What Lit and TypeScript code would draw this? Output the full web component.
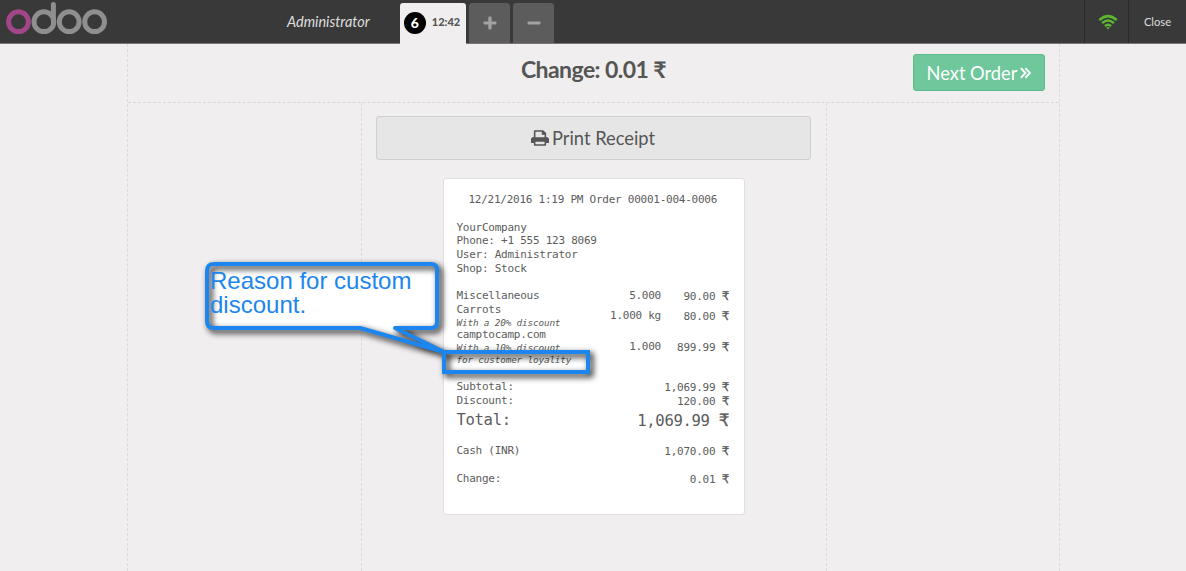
import { LitElement, html, css, svg } from "lit";
import { customElement } from "lit/decorators.js";

interface Line {
  name: string;
  notes: string[];
  qty: string;
  price: string;
}

const LINES: Line[] = [
  { name: "Miscellaneous", notes: [], qty: "5.000", price: "90.00" },
  { name: "Carrots", notes: ["With a 20% discount"], qty: "1.000 kg", price: "80.00" },
  {
    name: "camptocamp.com",
    notes: ["With a 10% discount", "for customer loyality"],
    qty: "1.000",
    price: "899.99",
  },
];

@customElement("pos-topbar")
export class PosTopbar extends LitElement {
  static styles = css`
    :host {
      display: flex;
      background: #393939;
      border-bottom: 1px solid #7b7577;
      box-sizing: border-box;
      height: 44px;
      font-family: Lato, sans-serif;
      color: #ddd;
    }
    .logo {
      width: 280px;
      height: 43px;
      flex: none;
    }
    .user {
      padding-left: 7px;
      margin-right: 16px;
      width: 97px;
      font-size: 14.5px;
      font-style: italic;
      line-height: 44px;
    }
    .tabs {
      display: flex;
      gap: 3px;
      align-items: flex-start;
      padding-top: 3px;
      flex: 1;
    }
    .tab {
      display: flex;
      align-items: center;
      justify-content: center;
      width: 41px;
      height: 40px;
      background: #5c5c5c;
      border-radius: 3px 3px 0 0;
    }
    .active {
      width: 66px;
      height: 41px;
      gap: 6px;
      margin-right: -0.4px;
      background: #f0eeee;
      color: #555;
      font-size: 11px;
      font-weight: 900;
    }
    .time {
      margin: 0 2px 4px 0;
    }
    .num {
      width: 22px;
      height: 22px;
      line-height: 22px;
      margin-bottom: 2px;
      border-radius: 50%;
      background: #000;
      color: #fff;
      text-align: center;
      font-size: 14px;
      font-weight: 900;
    }
    .tab svg {
      margin-left: 1px;
    }
    .wifi,
    .close {
      display: flex;
      align-items: center;
      justify-content: center;
      border-left: 1px solid #292929;
      box-sizing: border-box;
    }
    .wifi {
      width: 44px;
      padding-left: 3px;
    }
    .close {
      width: 58px;
      font-size: 11.2px;
    }
  `;

  render() {
    return html`
      <svg class="logo" viewBox="0 0 280 43" fill="none" stroke-width="5" stroke="#8f8f8f">
        <circle cx="18.5" cy="21.7" r="9.9" stroke="#a24689" />
        <circle cx="43.9" cy="21.7" r="9.9" />
        <path d="M53.4 21.700V4.500" stroke-linecap="round" />
        <circle cx="69.2" cy="21.7" r="9.9" />
        <circle cx="94.6" cy="21.7" r="9.9" />
      </svg>
      <div class="user">Administrator</div>
      <div class="tabs">
        <div class="tab active"><span class="num">6</span><span class="time">12:42</span></div>
        <div class="tab">
          <svg width="14" height="14" viewBox="0 0 14 14" fill="#a2a2a2">
            <path d="M5.300 1.500q0-1 1-1h1.300q1 0 1 1v3.900h3.900q1 0 1 1v1.200q0 1-1 1H8.600v3.900q0 1-1 1H6.300q-1 0-1-1V8.600H1.500q-1 0-1-1V6.400q0-1 1-1h3.800z" />
          </svg>
        </div>
        <div class="tab">
          <svg width="14" height="14" viewBox="0 0 14 14" fill="#a2a2a2">
            <rect x=".5" y="5.4" width="13" height="3.2" rx="1" />
          </svg>
        </div>
      </div>
      <div class="wifi">
        <svg width="20" height="16" viewBox="0 0 20 16" fill="none" stroke="#5cb531" stroke-width="2.5">
          <path d="M1.300 6.100Q10-1.900 18.700 6.100M4.100 9.100Q10 3.900 15.900 9.100M6.900 12.100Q10 9.500 13.100 12.100" />
          <path d="M8.200 13.600q1.800-1.300 3.600 0L10 15.600z" fill="#5cb531" stroke="none" />
        </svg>
      </div>
      <div class="close">Close</div>
    `;
  }
}

@customElement("pos-receipt")
export class PosReceipt extends LitElement {
  static styles = css`
    :host {
      display: block;
      box-sizing: border-box;
      width: 302px;
      height: 337px;
      padding: 14.4px 14.5px 0 13px;
      background: #fff;
      border: 1px solid #e0dede;
      border-radius: 3px;
      color: #5c5c5c;
      font: 11px/13.7px "DejaVu Sans Mono", monospace;
      letter-spacing: -0.25px;
      white-space: pre;
    }
    .head {
      text-align: center;
      margin-bottom: 13.5px;
    }
    .line {
      display: grid;
      grid-template-columns: 1fr 80px 68px;
      align-items: center;
      text-align: right;
    }
    .name {
      text-align: left;
      line-height: 14px;
    }
    .note {
      font-size: 9.4px;
      letter-spacing: -0.18px;
      font-style: italic;
      line-height: 11.6px;
    }
    .lines {
      padding-top: 13.3px;
      padding-bottom: 14.4px;
    }
    .sum {
      display: flex;
      justify-content: space-between;
      line-height: 14.5px;
    }
    .total {
      font-size: 15.6px;
      letter-spacing: -0.35px;
      line-height: 22px;
    }
    .cash {
      margin-top: 13px;
    }
    .change {
      margin-top: 14px;
    }
    .amt {
      padding-top: 1px;
      margin-bottom: -1px;
    }
    .cur {
      font-family: "DejaVu Sans", sans-serif;
      font-size: 1.08em;
      line-height: 1;
      -webkit-text-stroke: 0.3px #5c5c5c;
    }
  `;

  private sum(label: string, amount: string, cls = "") {
    return html`<div class="sum ${cls}"><span>${label}</span><span class="amt">${amount} <span class="cur">₹</span></span></div>`;
  }

  render() {
    return html`<div class="head">12/21/2016 1:19 PM Order 00001-004-0006</div><div>YourCompany</div><div>Phone: +1 555 123 8069</div><div>User: Administrator</div><div>Shop: Stock</div><div class="lines">${LINES.map(
      (l) =>
        html`<div class="line"><div class="name">${l.name}${l.notes.map((n) => html`<div class="note">${n}</div>`)}</div><span>${l.qty}</span><span class="amt">${l.price} <span class="cur">₹</span></span></div>`
    )}</div>${this.sum("Subtotal:", "1,069.99")}${this.sum("Discount:", "120.00")}${this.sum("Total:", "1,069.99", "total")}${this.sum("Cash (INR)", "1,070.00", "cash")}${this.sum("Change:", "0.01", "change")}`;
  }
}

@customElement("app-root")
export class AppRoot extends LitElement {
  static styles = css`
    :host {
      display: flex;
      flex-direction: column;
      position: relative;
      height: 571px;
      overflow: hidden;
      background: #f0eeee;
      font-family: Lato, sans-serif;
      color: #555;
    }
    .screen {
      flex: 1;
      width: 933px;
      margin-left: 127px;
      box-sizing: border-box;
      border: dashed #dcdada;
      border-width: 0 1px;
      display: flex;
      flex-direction: column;
    }
    .top {
      height: 59px;
      box-sizing: border-box;
      border-bottom: 1px dashed #d8d6d6;
      display: grid;
      grid-template-columns: 1fr auto 1fr;
      align-items: start;
    }
    .title {
      grid-column: 2;
      margin: 0;
      padding-top: 11px;
      font-size: 23px;
      letter-spacing: -0.55px;
      line-height: 29px;
      font-weight: 700;
    }
    .next {
      justify-self: end;
      display: flex;
      align-items: center;
      justify-content: center;
      gap: 3px;
      margin: 10px 14px 0 0;
      width: 132px;
      height: 37px;
      box-sizing: border-box;
      background: #6ec89b;
      border: 1px solid #5eb98b;
      border-radius: 3px;
      color: #fff;
      font-size: 18.3px;
    }
    .center {
      flex: 1;
      width: 466px;
      box-sizing: border-box;
      margin-left: 233px;
      border: dashed #dcdada;
      border-width: 0 1px;
      padding: 13px 15px 0 14px;
      display: flex;
      flex-direction: column;
      align-items: center;
    }
    .print {
      align-self: stretch;
      display: flex;
      align-items: center;
      justify-content: center;
      gap: 3px;
      height: 44px;
      box-sizing: border-box;
      padding-right: 1px;
      background: #e6e6e6;
      border: 1px solid #cfcfcf;
      border-radius: 3px;
      font-size: 18.3px;
      margin-bottom: 18px;
    }
    .overlay {
      position: absolute;
      left: 0;
      top: 0;
    }
    .shade {
      filter: drop-shadow(3px 3px 3px rgba(0, 0, 0, 0.95));
    }
    .callout {
      position: absolute;
      left: 210px;
      top: 269px;
      color: #1c86ee;
      font: 24px/24px "Liberation Sans", Arial, sans-serif;
      white-space: pre;
    }
  `;

  render() {
    const bubble =
      "M214 264H431Q437 264 437 270V322Q437 328 431 328H395L444 352L360 328H214Q207 328 207 321V271Q207 264 214 264Z";
    return html`
      <pos-topbar></pos-topbar>
      <div class="screen">
        <div class="top">
          <h1 class="title">Change: 0.01 ₹</h1>
          <div class="next">
            <span>Next Order</span>
            <svg width="11" height="12" viewBox="0 0 11 12" fill="none" stroke="#fff" stroke-width="1.9">
              <path d="M.9 1.200L5.400 6L.9 10.800M5.400 1.200L9.900 6L5.400 10.800" />
            </svg>
          </div>
        </div>
        <div class="center">
          <div class="print">
            <svg width="18" height="16" viewBox="0 0 17 16" preserveAspectRatio="none" fill="#555">
              <path
                fill-rule="evenodd"
                d="M2.700 7V1.300Q2.700 .3 3.700 .3H11.500L14.300 3V7Q17 7 17 9.500V12.500Q17 13 16.500 13H14.300V14.700Q14.300 15.700 13.300 15.700H3.700Q2.700 15.700 2.700 14.700V13H.5Q0 13 0 12.500V9.500Q0 7 2.700 7ZM4.200 1.800V7.300H12.800V4.700H10.200V1.800ZM4.200 11.800V14.200H12.800V11.800Z"
              />
            </svg>
            <span>Print Receipt</span>
          </div>
          <pos-receipt></pos-receipt>
        </div>
      </div>
      <svg class="overlay" width="1186" height="571" fill="none">
        ${svg`<path d=${bubble} fill="#fff" />
        <path class="shade" d=${bubble} stroke="#1c86ee" stroke-width="4" stroke-linejoin="round" />
        <rect class="shade" x="444" y="352" width="144" height="20" stroke="#1c86ee" stroke-width="4" />`}
      </svg>
      <div class="callout">Reason for custom
discount.</div>
    `;
  }
}
